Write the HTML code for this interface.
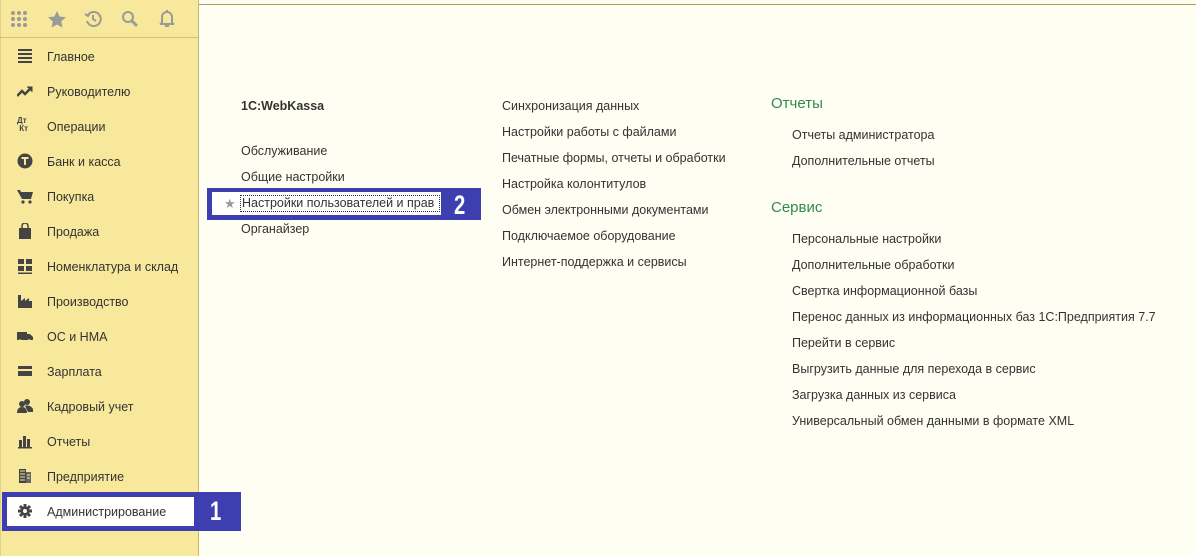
<!DOCTYPE html>
<html><head><meta charset="utf-8"><style>
*{margin:0;padding:0;box-sizing:border-box}
body{width:1196px;height:556px;overflow:hidden;background:#fffef2;font-family:"Liberation Sans",sans-serif;font-size:12.5px;color:#333;position:relative}
.sb{position:absolute;left:0;top:0;width:199px;height:556px;background:#f8e89c;border-right:1px solid #c8b878;border-left:1px solid #e0d090}
.hdr{position:absolute;left:0;top:0;width:198px;height:38px;border-bottom:1px solid #d2c07a}
.topline{position:absolute;left:199px;top:4px;right:0;height:1px;background:#a8a060}
.it{position:absolute;left:47px;font-size:12.5px;color:#333;line-height:16px;margin-top:1px}
.ic{position:absolute;left:17px;width:16px;height:16px}
.t{position:absolute;line-height:16px;white-space:nowrap;margin-top:1px}
.g{color:#2f8a4f;font-size:15px}
.blue{position:absolute;background:#3d3fb0}
.num{position:absolute;color:#fff;font-weight:bold;font-size:27px;line-height:28px;transform:scaleX(0.75);transform-origin:left top}
</style></head><body>
<div class="sb"></div>
<div class="hdr"></div>
<div class="topline"></div>
<svg style="position:absolute;left:10px;top:10px" width="18" height="18" viewBox="0 0 18 18" fill="#9a9a9a"><circle cx="3" cy="3" r="2"/><circle cx="9" cy="3" r="2"/><circle cx="15" cy="3" r="2"/><circle cx="3" cy="9" r="2"/><circle cx="9" cy="9" r="2"/><circle cx="15" cy="9" r="2"/><circle cx="3" cy="15" r="2"/><circle cx="9" cy="15" r="2"/><circle cx="15" cy="15" r="2"/></svg>
<svg style="position:absolute;left:48px;top:11px" width="18" height="17" viewBox="0 0 24 23" fill="#9a9a9a"><path d="M12 0l3.5 7.5 8.5 1-6.3 5.7 1.8 8.3L12 18.3 4.5 22.5l1.8-8.3L0 8.5l8.5-1z"/></svg>
<svg style="position:absolute;left:84px;top:10px" width="18" height="18" viewBox="0 0 18 18" fill="none" stroke="#9a9a9a" stroke-width="2"><path d="M4 5a7 7 0 1 1-1 6"/><path d="M9 5v4l3 2"/><path d="M1 4l3 2 2-3" /></svg>
<svg style="position:absolute;left:121px;top:10px" width="18" height="18" viewBox="0 0 18 18" fill="none" stroke="#9a9a9a" stroke-width="2"><circle cx="7" cy="7" r="5"/><path d="M11 11l5 5" stroke-width="3"/></svg>
<svg style="position:absolute;left:159px;top:9px" width="16" height="19" viewBox="0 0 16 19" fill="none" stroke="#9a9a9a" stroke-width="2"><path d="M3 14V8a5 5 0 0 1 10 0v6l2 1H1z"/><path d="M6 17h4"/><path d="M8 1v2"/></svg>
<svg class="ic" style="top:48px" viewBox="0 0 16 16" fill="#444"><rect x="1" y="1" width="14" height="2"/><rect x="1" y="5" width="14" height="2"/><rect x="1" y="9" width="14" height="2"/><rect x="1" y="13" width="14" height="2"/></svg>
<div class="it" style="top:48px">Главное</div>
<svg class="ic" style="top:83px" viewBox="0 0 16 16" fill="none" stroke="#444" stroke-width="2.5"><path d="M0 13l5-5 3 3 6-6"/><path d="M10 4h5v5" fill="#444" stroke-width="1"/></svg>
<div class="it" style="top:83px">Руководителю</div>
<div class="ic" style="top:117px;font-size:8px;font-weight:bold;color:#444;line-height:8px">Дт<br>&nbsp;Кт</div>
<div class="it" style="top:118px">Операции</div>
<svg class="ic" style="top:153px" viewBox="0 0 16 16"><circle cx="8" cy="8" r="7.5" fill="#444"/><path d="M4.5 5h7M8 5v7" stroke="#f8e89c" stroke-width="2"/></svg>
<div class="it" style="top:153px">Банк и касса</div>
<svg class="ic" style="top:188px" viewBox="0 0 16 16" fill="#444"><path d="M0 2h3l1 2h12l-2 7H5z"/><circle cx="6" cy="14" r="1.6"/><circle cx="13" cy="14" r="1.6"/></svg>
<div class="it" style="top:188px">Покупка</div>
<svg class="ic" style="top:223px" viewBox="0 0 16 16" fill="#444"><path d="M2 5h12v11H2z"/><path d="M5 6V3a3 3 0 0 1 6 0v3" fill="none" stroke="#444" stroke-width="1.5"/></svg>
<div class="it" style="top:223px">Продажа</div>
<svg class="ic" style="top:258px" viewBox="0 0 16 16" fill="#444"><rect x="1" y="1" width="6" height="5"/><rect x="9" y="1" width="6" height="5"/><rect x="1" y="8" width="6" height="5"/><rect x="9" y="8" width="6" height="5"/><rect x="1" y="14.5" width="14" height="1.5"/></svg>
<div class="it" style="top:258px">Номенклатура и склад</div>
<svg class="ic" style="top:293px" viewBox="0 0 16 16" fill="#444"><path d="M1 15V2h3v6l4-3v3l4-3v3h3v7z"/></svg>
<div class="it" style="top:293px">Производство</div>
<svg class="ic" style="top:328px" viewBox="0 0 16 16" fill="#444"><path d="M0 4h10v8H0zM10 6h3l3 3v3h-6z"/><circle cx="3" cy="13" r="1.6" fill="#f8e89c"/><circle cx="12" cy="13" r="1.6" fill="#f8e89c"/></svg>
<div class="it" style="top:328px">ОС и НМА</div>
<svg class="ic" style="top:363px" viewBox="0 0 16 16" fill="#444"><rect x="1" y="3" width="14" height="10"/><rect x="1" y="6" width="14" height="2" fill="#f8e89c"/></svg>
<div class="it" style="top:363px">Зарплата</div>
<svg class="ic" style="top:398px" viewBox="0 0 16 16" fill="#444"><circle cx="10" cy="4" r="3"/><circle cx="5" cy="6" r="3"/><path d="M0 15c0-4 2-6 5-6s5 2 5 6z"/><path d="M8 8c1-1 6-1 8 3v3h-5z"/></svg>
<div class="it" style="top:398px">Кадровый учет</div>
<svg class="ic" style="top:433px" viewBox="0 0 16 16" fill="#444"><rect x="2" y="7" width="3" height="7"/><rect x="6" y="3" width="3" height="11"/><rect x="10" y="6" width="3" height="8"/><rect x="1" y="14" width="14" height="1.5"/></svg>
<div class="it" style="top:433px">Отчеты</div>
<svg class="ic" style="top:468px" viewBox="0 0 16 16" fill="#444"><path d="M2 1h7v14H2z"/><path d="M9 4h5v11H9z" fill="#666"/><path d="M3 3h5M3 6h5M3 9h5M3 12h5M10 7h3M10 10h3" stroke="#f8e89c" stroke-width="1"/></svg>
<div class="it" style="top:468px">Предприятие</div>
<div class="blue" style="left:2px;top:492px;width:239px;height:39px"></div>
<div style="position:absolute;left:7px;top:497px;width:187px;height:29px;background:#fff"></div>
<svg class="ic" style="top:503px" viewBox="0 0 16 16"><g stroke="#444" stroke-width="3"><path d="M8 1v14M1 8h14M3 3l10 10M13 3L3 13"/></g><circle cx="8" cy="8" r="4.5" fill="#444"/><circle cx="8" cy="8" r="2" fill="#fff"/></svg>
<div class="it" style="top:503px">Администрирование</div>
<div class="num" style="left:210px;top:497px">1</div>
<div class="t" style="left:241px;top:97px;font-weight:bold;color:#333">1С:WebKassa</div>
<div class="t" style="left:241px;top:142px">Обслуживание</div>
<div class="t" style="left:241px;top:168px">Общие настройки</div>
<div class="blue" style="left:207px;top:188px;width:274px;height:32px"></div>
<div style="position:absolute;left:212px;top:192px;width:229px;height:23px;background:#fff"></div>
<div class="t" style="left:224px;top:195px;color:#999;font-size:13px">★</div>
<div class="t" style="left:240px;top:194px;border:1px dotted #333;padding:0 1px;line-height:15px;width:200px;overflow:hidden">Настройки пользователей и прав</div>
<div class="num" style="left:454px;top:191px">2</div>
<div class="t" style="left:241px;top:220px">Органайзер</div>
<div class="t" style="left:502px;top:97px">Синхронизация данных</div>
<div class="t" style="left:502px;top:123px">Настройки работы с файлами</div>
<div class="t" style="left:502px;top:149px">Печатные формы, отчеты и обработки</div>
<div class="t" style="left:502px;top:175px">Настройка колонтитулов</div>
<div class="t" style="left:502px;top:201px">Обмен электронными документами</div>
<div class="t" style="left:502px;top:227px">Подключаемое оборудование</div>
<div class="t" style="left:502px;top:253px">Интернет-поддержка и сервисы</div>
<div class="t g" style="left:771px;top:95px">Отчеты</div>
<div class="t" style="left:792px;top:126px">Отчеты администратора</div>
<div class="t" style="left:792px;top:152px">Дополнительные отчеты</div>
<div class="t g" style="left:771px;top:199px">Сервис</div>
<div class="t" style="left:792px;top:230px">Персональные настройки</div>
<div class="t" style="left:792px;top:256px">Дополнительные обработки</div>
<div class="t" style="left:792px;top:282px">Свертка информационной базы</div>
<div class="t" style="left:792px;top:308px">Перенос данных из информационных баз 1С:Предприятия 7.7</div>
<div class="t" style="left:792px;top:334px">Перейти в сервис</div>
<div class="t" style="left:792px;top:360px">Выгрузить данные для перехода в сервис</div>
<div class="t" style="left:792px;top:386px">Загрузка данных из сервиса</div>
<div class="t" style="left:792px;top:412px">Универсальный обмен данными в формате XML</div>
</body></html>
